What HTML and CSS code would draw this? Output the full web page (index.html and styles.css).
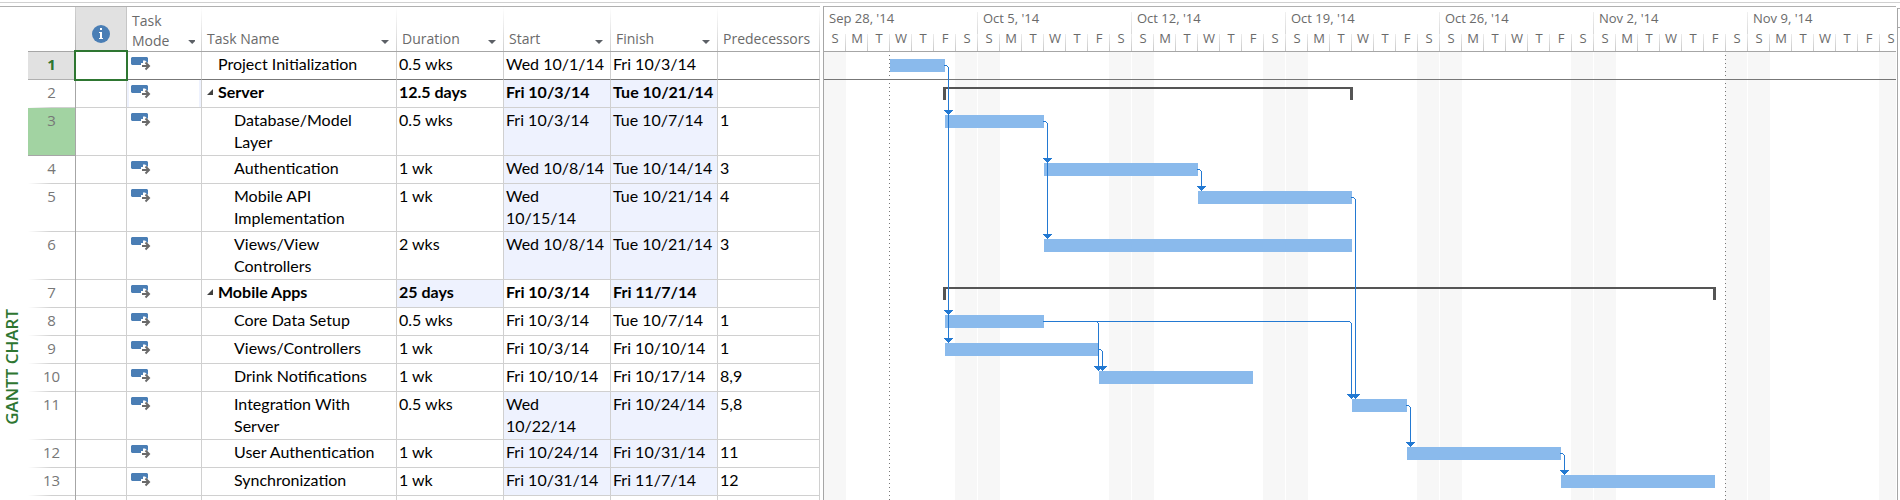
FILE: index.html
```html
<!DOCTYPE html>
<html lang="en">
<head>
<meta charset="utf-8">
<title>Gantt Chart</title>
<link rel="stylesheet" href="styles.css">
</head>
<body>
<svg class="defs" aria-hidden="true">
  <symbol id="auto" viewBox="0 0 20 14">
    <path fill="#4a7eb5" d="M1 0H16L17 1V6L14 3.500H12V6H10V8H1L0 7V1Z"/>
    <path fill="none" stroke="#6a6a6a" stroke-width="2" d="M11 9H18M14.500 5.500L18 9L14.500 12.500"/>
  </symbol>
</svg>
<main class="app">
  <aside class="view-name"><span>GANTT CHART</span></aside>
  <section class="sheet">
    <table class="tasks">
      <colgroup><col class="c-id"><col class="c-info"><col class="c-mode"><col class="c-name"><col class="c-date"><col class="c-date"><col class="c-date"><col class="c-pred"></colgroup>
      <thead>
        <tr>
          <th class="corner"></th>
          <th class="info"><svg width="18" height="18" viewBox="0 0 18 18" role="img" aria-label="Indicators"><circle cx="9" cy="9" r="9" fill="#4a7eb5"/><path fill="#fff" d="M8 3H10V5H8ZM7 7H10V14H8V8H7ZM7 13H11V14H7Z"/></svg></th>
          <th><div class="head wrapped"><span>Task Mode</span><button class="drop" aria-label="Task Mode menu"></button></div></th>
          <th><div class="head"><span>Task Name</span><button class="drop" aria-label="Task Name menu"></button></div></th>
          <th><div class="head"><span>Duration</span><button class="drop" aria-label="Duration menu"></button></div></th>
          <th><div class="head"><span>Start</span><button class="drop" aria-label="Start menu"></button></div></th>
          <th><div class="head"><span>Finish</span><button class="drop" aria-label="Finish menu"></button></div></th>
          <th><div class="head"><span>Predecessors</span></div></th>
        </tr>
      </thead>
      <tbody>
        <tr class="current"><th>1</th><td class="selected"></td><td class="mode"><svg><use href="#auto"/></svg></td><td class="name">Project Initialization</td><td>0.5 wks</td><td>Wed 10/1/14</td><td>Fri 10/3/14</td><td></td></tr>
        <tr class="summary"><th>2</th><td></td><td class="mode edged"><svg><use href="#auto"/></svg></td><td class="name">Server</td><td>12.5 days</td><td class="hit">Fri 10/3/14</td><td class="hit">Tue 10/21/14</td><td></td></tr>
        <tr class="marked"><th>3</th><td></td><td class="mode"><svg><use href="#auto"/></svg></td><td class="name sub">Database/Model Layer</td><td>0.5 wks</td><td class="hit">Fri 10/3/14</td><td class="hit">Tue 10/7/14</td><td>1</td></tr>
        <tr><th>4</th><td></td><td class="mode"><svg><use href="#auto"/></svg></td><td class="name sub">Authentication</td><td>1 wk</td><td class="hit">Wed 10/8/14</td><td class="hit">Tue 10/14/14</td><td>3</td></tr>
        <tr><th>5</th><td></td><td class="mode"><svg><use href="#auto"/></svg></td><td class="name sub">Mobile API Implementation</td><td>1 wk</td><td class="hit">Wed 10/15/14</td><td class="hit">Tue 10/21/14</td><td>4</td></tr>
        <tr><th>6</th><td></td><td class="mode"><svg><use href="#auto"/></svg></td><td class="name sub">Views/View Controllers</td><td>2 wks</td><td class="hit">Wed 10/8/14</td><td class="hit">Tue 10/21/14</td><td>3</td></tr>
        <tr class="summary"><th>7</th><td></td><td class="mode"><svg><use href="#auto"/></svg></td><td class="name">Mobile Apps</td><td class="hit">25 days</td><td>Fri 10/3/14</td><td class="hit">Fri 11/7/14</td><td></td></tr>
        <tr><th>8</th><td></td><td class="mode"><svg><use href="#auto"/></svg></td><td class="name sub">Core Data Setup</td><td>0.5 wks</td><td>Fri 10/3/14</td><td>Tue 10/7/14</td><td>1</td></tr>
        <tr><th>9</th><td></td><td class="mode"><svg><use href="#auto"/></svg></td><td class="name sub">Views/Controllers</td><td>1 wk</td><td>Fri 10/3/14</td><td>Fri 10/10/14</td><td>1</td></tr>
        <tr><th>10</th><td></td><td class="mode"><svg><use href="#auto"/></svg></td><td class="name sub">Drink Notifications</td><td>1 wk</td><td>Fri 10/10/14</td><td>Fri 10/17/14</td><td>8,9</td></tr>
        <tr><th>11</th><td></td><td class="mode"><svg><use href="#auto"/></svg></td><td class="name sub">Integration With Server</td><td>0.5 wks</td><td class="hit">Wed 10/22/14</td><td class="hit">Fri 10/24/14</td><td>5,8</td></tr>
        <tr><th>12</th><td></td><td class="mode"><svg><use href="#auto"/></svg></td><td class="name sub">User Authentication</td><td>1 wk</td><td class="hit">Fri 10/24/14</td><td class="hit">Fri 10/31/14</td><td>11</td></tr>
        <tr><th>13</th><td></td><td class="mode"><svg><use href="#auto"/></svg></td><td class="name sub">Synchronization</td><td>1 wk</td><td class="hit">Fri 10/31/14</td><td class="hit">Fri 11/7/14</td><td>12</td></tr>
        <tr class="blank"><th></th><td></td><td></td><td></td><td></td><td></td><td></td><td></td></tr>
      </tbody>
    </table>
  </section>
  <section class="chart">
    <div class="timescale">
      <div class="week"><b>Sep 28, '14</b><i>S</i><i>M</i><i>T</i><i>W</i><i>T</i><i>F</i><i>S</i></div>
      <div class="week"><b>Oct 5, '14</b><i>S</i><i>M</i><i>T</i><i>W</i><i>T</i><i>F</i><i>S</i></div>
      <div class="week"><b>Oct 12, '14</b><i>S</i><i>M</i><i>T</i><i>W</i><i>T</i><i>F</i><i>S</i></div>
      <div class="week"><b>Oct 19, '14</b><i>S</i><i>M</i><i>T</i><i>W</i><i>T</i><i>F</i><i>S</i></div>
      <div class="week"><b>Oct 26, '14</b><i>S</i><i>M</i><i>T</i><i>W</i><i>T</i><i>F</i><i>S</i></div>
      <div class="week"><b>Nov 2, '14</b><i>S</i><i>M</i><i>T</i><i>W</i><i>T</i><i>F</i><i>S</i></div>
      <div class="week"><b>Nov 9, '14</b><i>S</i><i>M</i><i>T</i><i>W</i><i>T</i><i>F</i><i>S</i></div>
    </div>
    <div class="plot">
      <svg class="bars" role="img" aria-label="Task bars" shape-rendering="crispEdges">
        <defs><path id="tip" d="M-4 0H5V1H4V2H3V3H2V4H1V5H0V4H-1V3H-2V2H-3V1H-4Z"/></defs>
        <path class="bound" d="M65.500 3V448M901.500 3V448"/>
        <rect class="rule" y="27" width="100%" height="1"/>
        <g class="task">
          <rect x="66" y="7" width="55" height="13"/>
          <rect x="121" y="63" width="99" height="13"/>
          <rect x="220" y="111" width="154" height="13"/>
          <rect x="374" y="139" width="154" height="13"/>
          <rect x="220" y="187" width="308" height="13"/>
          <rect x="121" y="263" width="99" height="13"/>
          <rect x="121" y="291" width="154" height="13"/>
          <rect x="275" y="319" width="154" height="13"/>
          <rect x="528" y="347" width="55" height="13"/>
          <rect x="583" y="395" width="154" height="13"/>
          <rect x="737" y="423" width="154" height="13"/>
        </g>
        <path class="span" d="M119 48V35H529V48H526V37H122V48ZM119 248V235H892V248H889V237H122V248Z"/>
        <g class="link">
          <path d="M120 13.500H123M123 14.500H124M124.500 15V290"/>
          <path d="M219 69.500H222M222 70.500H223M223.500 71V186"/>
          <path d="M373 117.500H376M376 118.500H377M377.500 119V138"/>
          <path d="M527 145.500H530M530 146.500H531M531.500 147V346"/>
          <path d="M219 269.500H526M526 270.500H527M527.500 271V346"/>
          <path d="M273 270.500H274M274.500 271V318"/>
          <path d="M275 297.500H277M277 298.500H278M278.500 299V318"/>
          <path d="M582 353.500H585M585 354.500H586M586.500 355V394"/>
          <path d="M736 401.500H739M739 402.500H740M740.500 403V422"/>
        </g>
        <g class="tips">
          <use href="#tip" x="124" y="58"/><use href="#tip" x="124" y="258"/><use href="#tip" x="124" y="286"/>
          <use href="#tip" x="223" y="106"/><use href="#tip" x="223" y="182"/>
          <use href="#tip" x="377" y="134"/>
          <use href="#tip" x="527" y="342"/><use href="#tip" x="531" y="342"/>
          <use href="#tip" x="274" y="314"/><use href="#tip" x="278" y="314"/>
          <use href="#tip" x="586" y="390"/><use href="#tip" x="740" y="418"/>
        </g>
      </svg>
    </div>
  </section>
  <div class="scroll"><div class="scroll-head"></div></div>
</main>
</body>
</html>
```
FILE: styles.css
```css
* { box-sizing: border-box; }
html, body { height: 100%; }
body {
  margin: 0;
  background: #fff;
  font-family: "Open Sans", "Noto Sans", sans-serif;
  color: #6a6a6a;
  overflow: hidden;
}
.defs { position: absolute; width: 0; height: 0; }
.app {
  display: flex;
  height: 100%;
  padding-top: 2px;
  background: linear-gradient(#d0d0d0, #d0d0d0) 0 2px / 100% 1px no-repeat;
}

/* view name on the left edge */
.view-name {
  flex: none;
  width: 28px;
  margin-top: 4px;
  padding-bottom: 75px;
  border-top: 1px solid #b0b0b0;
  display: flex;
  align-items: flex-end;
}
.view-name span {
  width: 24px;
  writing-mode: vertical-rl;
  transform: rotate(180deg);
  font-size: 17px;
  font-weight: 600;
  line-height: 24px;
  color: #2e7631;
  white-space: nowrap;
}

/* task sheet */
.sheet {
  flex: none;
  margin: 4px 3px 0 0;
  border-top: 1px solid #b0b0b0;
  overflow: hidden;
}
.tasks {
  width: 792px;
  table-layout: fixed;
  border-collapse: separate;
  border-spacing: 0;
}
.c-id { width: 48px; }
.c-info { width: 51px; }
.c-mode { width: 75px; }
.c-name { width: 195px; }
.c-date { width: 107px; }
.c-pred { width: 102px; }
.tasks th { font-weight: 400; padding: 0; }
.tasks thead th {
  height: 45px;
  vertical-align: bottom;
  text-align: left;
  font-size: 14px;
  line-height: 20px;
  border-bottom: 1px solid #a6a6a6;
  background: linear-gradient(#fff, #d0d0d0) right / 1px 100% no-repeat;
}
.tasks thead .corner { background: linear-gradient(#d0d0d0, #b0b0b0) right / 1px 100% no-repeat; }
.tasks thead .info {
  background: #e1e1e1;
  border-right: 1px solid #c6c6c6;
  text-align: center;
  padding-bottom: 8px;
}
.info svg { display: block; margin: 0 auto; }
.head {
  display: flex;
  align-items: flex-end;
  justify-content: space-between;
  padding: 0 7px 2px 5px;
}
.head.wrapped { padding-bottom: 0; }
.wrapped .drop { margin-bottom: 2px; }
.drop {
  width: 10px;
  height: 14px;
  padding: 0;
  border: 0;
  background: #5c6066;
  clip-path: polygon(1px 5px, 9px 5px, 5px 9px);
}
.tasks tbody th {
  height: 28px;
  padding-top: 1px;
  vertical-align: top;
  font-size: 15px;
  line-height: 22px;
  color: #777;
  border-right: 1px solid #a6a6a6;
  background: linear-gradient(90deg, #fff, #d0d0d0 50%) bottom / 100% 1px no-repeat;
}
.tasks td {
  height: 28px;
  padding: 1px 2px 2px;
  vertical-align: top;
  font-family: Lato, sans-serif;
  font-size: 16px;
  line-height: 22px;
  color: #000;
  border-right: 1px solid #d0d0d0;
  border-bottom: 1px solid #d0d0d0;
}
.tasks .name { padding-left: 16px; position: relative; }
.tasks .sub { padding-left: 32px; }
.summary td { font-weight: 700; }
.summary .name::before {
  content: "";
  position: absolute;
  left: 5px;
  top: 9px;
  width: 6px;
  height: 6px;
  background: #404040;
  clip-path: polygon(100% 0, 100% 100%, 0 100%);
}
.tasks .mode { padding: 5px 4px 0; }
.mode svg { display: block; width: 20px; height: 14px; }
.tasks .edged { box-shadow: inset 2px 0 #eef2fe, inset -2px 0 #eef2fe; }
.tasks .hit { background: #eef2fe; }
.tasks .current th {
  background: #e1e1e1;
  border-bottom: 1px solid #b0b0b0;
  color: #2e7631;
  font-weight: 700;
}
.tasks .current td { border-bottom-color: #777; }
.tasks .marked th {
  background: #a2d3a2;
  border-bottom: 1px solid #a6a6a6;
}
.selected { position: relative; }
.selected::after {
  content: "";
  position: absolute;
  inset: -2px;
  border: 2px solid #2e7631;
}
.tasks .blank td { border-bottom: 0; }

/* chart */
.chart {
  flex: 1;
  min-width: 0;
  display: flex;
  flex-direction: column;
  margin-top: 4px;
  border-top: 1px solid #b0b0b0;
  border-left: 1px solid #a6a6a6;
  overflow: hidden;
}
.timescale {
  flex: none;
  display: flex;
  height: 45px;
  border-bottom: 1px solid #a6a6a6;
  overflow: hidden;
}
.week {
  flex: none;
  display: grid;
  grid-template-columns: repeat(7, 22px);
  grid-template-rows: 23px 17px;
  padding-top: 4px;
  background: linear-gradient(#f0f0f0, #c8c8c8) right bottom / 1px 39px no-repeat;
}
.week b {
  grid-column: 1 / -1;
  padding-left: 5px;
  font-size: 13px;
  font-weight: 400;
  line-height: 14px;
}
.week i {
  font-size: 13px;
  font-style: normal;
  line-height: 9px;
  text-align: center;
  background: linear-gradient(#ececec, #c8c8c8) right / 1px 100% no-repeat;
}
.plot {
  flex: 1;
  min-height: 0;
  background: repeating-linear-gradient(90deg, #f7f7f7 0 22px, #fff 22px 131px, #f7f7f7 131px 153px, #fff 153px 154px);
}
.bars { display: block; width: 100%; height: 100%; }
.bound { stroke: #777; stroke-dasharray: 1 3; }
.rule { fill: #777; }
.task { fill: #8abaec; }
.span { fill: #555; }
.link { stroke: #2379d2; fill: none; }
.tips { fill: #2379d2; }

/* scroll bar column */
.scroll {
  flex: none;
  width: 3px;
  margin: 6px 0 0 1px;
  border-left: 1px solid #a6a6a6;
}
.scroll-head {
  height: 20px;
  border-top: 1px solid #b0b0b0;
  border-bottom: 1px solid #a6a6a6;
}
```
